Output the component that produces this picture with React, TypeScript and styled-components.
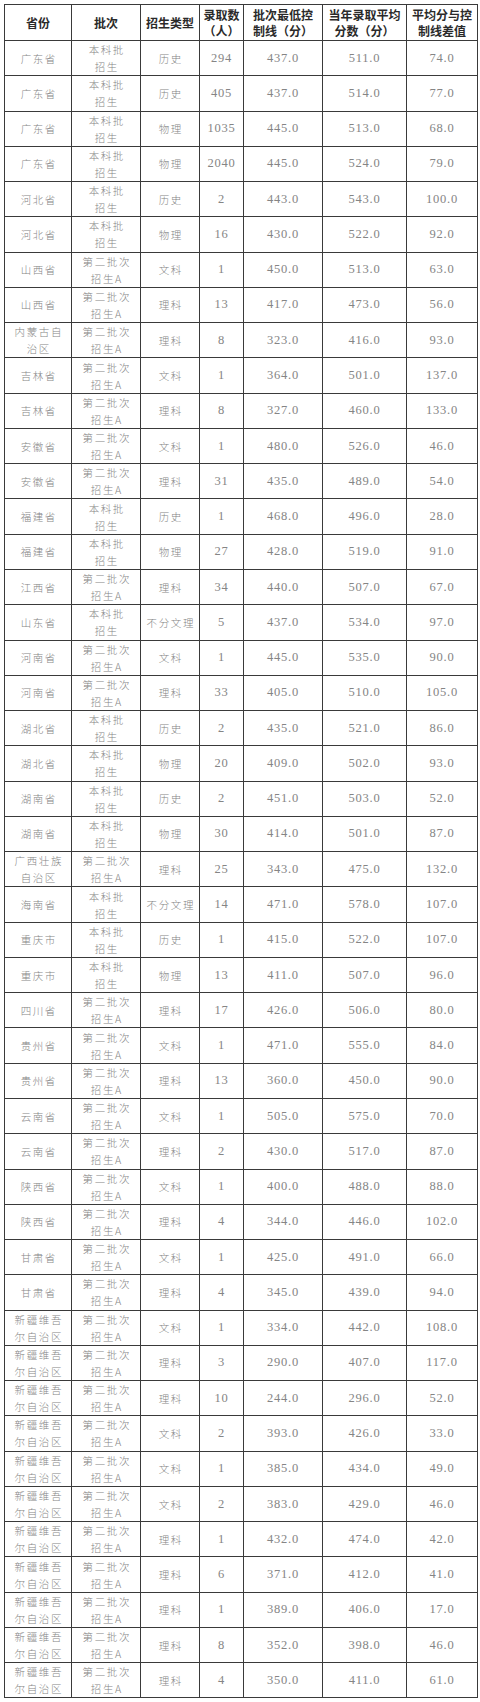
import React from "react";
import styled, { createGlobalStyle } from "styled-components";

const GlobalStyle = createGlobalStyle`
  html, body {
    margin: 0;
    padding: 0;
    background: #ffffff;
  }
  body {
    font-family: "Noto Sans CJK SC", "Noto Sans", sans-serif;
  }
`;

const Page = styled.div`
  padding: 4px 0 0 4px;
  width: 480px;
  box-sizing: border-box;
`;

const Table = styled.table`
  width: 473px;
  border-collapse: collapse;
  table-layout: fixed;
  border: 1.5px solid #3a3a3a;
`;

const HeadCell = styled.th`
  height: 35px;
  padding: 0;
  border: 1px solid #3a3a3a;
  font-family: "Noto Sans CJK SC", sans-serif;
  font-size: 12px;
  font-weight: 700;
  line-height: 16px;
  color: #2a2a2a;
  text-align: center;
  vertical-align: middle;
`;

const Row = styled.tr`
  height: 35.28px;
`;

const Cell = styled.td<{ $num?: boolean }>`
  padding: 0;
  border: 1px solid #3a3a3a;
  text-align: center;
  vertical-align: middle;
  color: #858585;
  font-family: ${(p) =>
    p.$num ? `"Liberation Serif", "Noto Sans CJK SC", serif` : `"Noto Sans CJK SC", sans-serif`};
  font-size: ${(p) => (p.$num ? "12.5px" : "10.5px")};
  font-weight: ${(p) => (p.$num ? 400 : 300)};
  letter-spacing: ${(p) => (p.$num ? "0.8px" : "1.6px")};
  line-height: 17px;
  padding-left: ${(p) => (p.$num ? "0" : "1.6px")};
`;

const Line = styled.span`
  display: block;
  white-space: nowrap;
`;

const widths = [67, 69, 59, 44, 79, 84, 71];

const headers: string[][] = [
  ["省份"],
  ["批次"],
  ["招生类型"],
  ["录取数", "（人）"],
  ["批次最低控", "制线（分）"],
  ["当年录取平均", "分数（分）"],
  ["平均分与控", "制线差值"],
];

const splits: Record<string, string[]> = {
  本科批招生: ["本科批", "招生"],
  第二批次招生A: ["第二批次", "招生A"],
  内蒙古自治区: ["内蒙古自", "治区"],
  广西壮族自治区: ["广西壮族", "自治区"],
  新疆维吾尔自治区: ["新疆维吾", "尔自治区"],
};

const XJ = "新疆维吾尔自治区";
const B = "本科批招生";
const S = "第二批次招生A";

type Entry = [string, string, string, string, string, string, string];

const rows: Entry[] = [
  ["广东省", B, "历史", "294", "437.0", "511.0", "74.0"],
  ["广东省", B, "历史", "405", "437.0", "514.0", "77.0"],
  ["广东省", B, "物理", "1035", "445.0", "513.0", "68.0"],
  ["广东省", B, "物理", "2040", "445.0", "524.0", "79.0"],
  ["河北省", B, "历史", "2", "443.0", "543.0", "100.0"],
  ["河北省", B, "物理", "16", "430.0", "522.0", "92.0"],
  ["山西省", S, "文科", "1", "450.0", "513.0", "63.0"],
  ["山西省", S, "理科", "13", "417.0", "473.0", "56.0"],
  ["内蒙古自治区", S, "理科", "8", "323.0", "416.0", "93.0"],
  ["吉林省", S, "文科", "1", "364.0", "501.0", "137.0"],
  ["吉林省", S, "理科", "8", "327.0", "460.0", "133.0"],
  ["安徽省", S, "文科", "1", "480.0", "526.0", "46.0"],
  ["安徽省", S, "理科", "31", "435.0", "489.0", "54.0"],
  ["福建省", B, "历史", "1", "468.0", "496.0", "28.0"],
  ["福建省", B, "物理", "27", "428.0", "519.0", "91.0"],
  ["江西省", S, "理科", "34", "440.0", "507.0", "67.0"],
  ["山东省", B, "不分文理", "5", "437.0", "534.0", "97.0"],
  ["河南省", S, "文科", "1", "445.0", "535.0", "90.0"],
  ["河南省", S, "理科", "33", "405.0", "510.0", "105.0"],
  ["湖北省", B, "历史", "2", "435.0", "521.0", "86.0"],
  ["湖北省", B, "物理", "20", "409.0", "502.0", "93.0"],
  ["湖南省", B, "历史", "2", "451.0", "503.0", "52.0"],
  ["湖南省", B, "物理", "30", "414.0", "501.0", "87.0"],
  ["广西壮族自治区", S, "理科", "25", "343.0", "475.0", "132.0"],
  ["海南省", B, "不分文理", "14", "471.0", "578.0", "107.0"],
  ["重庆市", B, "历史", "1", "415.0", "522.0", "107.0"],
  ["重庆市", B, "物理", "13", "411.0", "507.0", "96.0"],
  ["四川省", S, "理科", "17", "426.0", "506.0", "80.0"],
  ["贵州省", S, "文科", "1", "471.0", "555.0", "84.0"],
  ["贵州省", S, "理科", "13", "360.0", "450.0", "90.0"],
  ["云南省", S, "文科", "1", "505.0", "575.0", "70.0"],
  ["云南省", S, "理科", "2", "430.0", "517.0", "87.0"],
  ["陕西省", S, "文科", "1", "400.0", "488.0", "88.0"],
  ["陕西省", S, "理科", "4", "344.0", "446.0", "102.0"],
  ["甘肃省", S, "文科", "1", "425.0", "491.0", "66.0"],
  ["甘肃省", S, "理科", "4", "345.0", "439.0", "94.0"],
  [XJ, S, "文科", "1", "334.0", "442.0", "108.0"],
  [XJ, S, "理科", "3", "290.0", "407.0", "117.0"],
  [XJ, S, "理科", "10", "244.0", "296.0", "52.0"],
  [XJ, S, "文科", "2", "393.0", "426.0", "33.0"],
  [XJ, S, "文科", "1", "385.0", "434.0", "49.0"],
  [XJ, S, "文科", "2", "383.0", "429.0", "46.0"],
  [XJ, S, "理科", "1", "432.0", "474.0", "42.0"],
  [XJ, S, "理科", "6", "371.0", "412.0", "41.0"],
  [XJ, S, "理科", "1", "389.0", "406.0", "17.0"],
  [XJ, S, "理科", "8", "352.0", "398.0", "46.0"],
  [XJ, S, "理科", "4", "350.0", "411.0", "61.0"],
];

function TextCell({ value }: { value: string }) {
  const lines = splits[value] ?? [value];
  return (
    <Cell>
      {lines.map((l) => (
        <Line key={l}>{l}</Line>
      ))}
    </Cell>
  );
}

export default function App() {
  return (
    <Page>
      <GlobalStyle />
      <Table>
        <colgroup>
          {widths.map((w, i) => (
            <col key={i} style={{ width: w }} />
          ))}
        </colgroup>
        <thead>
          <tr>
            {headers.map((h, i) => (
              <HeadCell key={i}>
                {h.map((l) => (
                  <Line key={l}>{l}</Line>
                ))}
              </HeadCell>
            ))}
          </tr>
        </thead>
        <tbody>
          {rows.map((r, i) => (
            <Row key={i}>
              <TextCell value={r[0]} />
              <TextCell value={r[1]} />
              <TextCell value={r[2]} />
              <Cell $num>{r[3]}</Cell>
              <Cell $num>{r[4]}</Cell>
              <Cell $num>{r[5]}</Cell>
              <Cell $num>{r[6]}</Cell>
            </Row>
          ))}
        </tbody>
      </Table>
    </Page>
  );
}
